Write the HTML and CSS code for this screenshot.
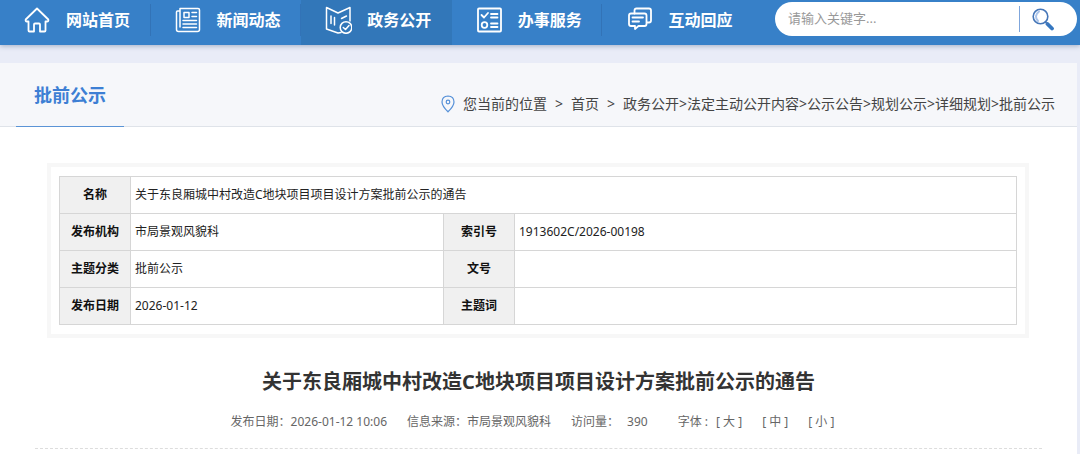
FILE: index.html
```
<!DOCTYPE html>
<html lang="zh-CN">

<head>
    <meta charset="UTF-8">
    <meta name="viewport" content="width=device-width, initial-scale=1.0">
    <title>批前公示</title>
    <link rel="stylesheet" href="styles.css">
</head>

<body>
    <header class="header">
        <nav class="nav">
            <a href="#" class="nav-item">
                <svg class="nav-icon" viewBox="0 0 28 28">
                    <path d="M14 2.500 L2.700 13.500 Q2.200 15.500 4 15.500 H5.500 V24.500 Q5.500 25.500 6.500 25.500 H11 V18.500 Q11 17.500 12 17.500 H16 Q17 17.500 17 18.500 V25.500 H21.500 Q22.500 25.500 22.500 24.500 V15.500 H24 Q25.800 15.500 25.300 13.500 Z" />
                </svg>
                <span>网站首页</span>
            </a>
            <a href="#" class="nav-item">
                <svg class="nav-icon thin" viewBox="0 0 28 28">
                    <path d="M6 2.500 H24 Q25.500 2.500 25.500 4 V23.500 Q25.500 25.500 23.500 25.500 H4.500 Q2.500 25.500 2.500 23.500 V6 Q2.500 5 3.500 5 H6 V2.500 M6 5 V21" />
                    <path d="M10 6.500 H15 V11.500 H10 Z M18 6.500 H22.500 M18 10.500 H22.500 M9 14.500 H22.500 M9 18 H22.500 M9 21.500 H22.500" />
                </svg>
                <span>新闻动态</span>
            </a>
            <a href="#" class="nav-item active">
                <svg class="nav-icon thin" viewBox="0 0 28 28">
                    <path d="M14 7 L2.500 1.500 V23 L14 27 L17 26.500 M14 7 L26 1.500 V15" />
                    <path d="M7 10 V17.500 M10.500 11.500 V19 M17.500 12.500 L22.500 10" />
                    <circle cx="22" cy="21.500" r="5.800" />
                    <path d="M19.300 21.500 L21.500 23.500 L25 19.500" />
                </svg>
                <span>政务公开</span>
            </a>
            <a href="#" class="nav-item">
                <svg class="nav-icon" viewBox="0 0 28 28">
                    <rect x="3" y="2.500" width="23" height="23" rx="1" />
                    <path d="M6.500 9 L9 11.500 L13 7 M16 8 H22.500 M16 11.500 H22.500 M16 17.500 H22.500 M16 21 H22.500" />
                    <circle cx="9.500" cy="19" r="2.800" />
                </svg>
                <span>办事服务</span>
            </a>
            <a href="#" class="nav-item">
                <svg class="nav-icon" viewBox="0 0 28 28">
                    <path d="M9.500 7.500 V4.500 Q9.500 2.500 11.500 2.500 H24 Q26 2.500 26 4.500 V14.500 Q26 16.500 24 16.500 H22" />
                    <path d="M6 7.500 H19.500 Q21.500 7.500 21.500 9.500 V18 Q21.500 20 19.500 20 H13.500 L10 23 V20 H6 Q4 20 4 18 V9.500 Q4 7.500 6 7.500 Z M7.500 11.500 H18 M7.500 15.500 H14" />
                </svg>
                <span>互动回应</span>
            </a>
        </nav>
        <form class="search">
            <input type="text" class="search-input" aria-label="搜索" placeholder="请输入关键字...">
            <button type="button" class="search-button" aria-label="搜索">
                <svg viewBox="0 0 24 24">
                    <path class="handle" d="M16.500 17 L21 21.500" />
                    <circle cx="9.500" cy="9.500" r="7.300" />
                    <path class="shine" d="M8 4.500 Q2.500 9 7 14" />
                    <path class="neck" d="M14.500 15 L17 17.500" />
                </svg>
            </button>
        </form>
    </header>

    <main class="page">
        <div class="page-head">
            <h2 class="page-title">批前公示</h2>
            <div class="breadcrumb">
                <svg class="pin" viewBox="0 0 14 18">
                    <path d="M7 1 Q13 1.300 13 7 Q13 11 7 16.800 Q1 11 1 7 Q1 1.300 7 1 Z" />
                    <circle cx="7" cy="7" r="1.800" />
                </svg>
                <span>您当前的位置</span>
                <span>&gt;</span>
                <a href="#">首页</a>
                <span>&gt;</span>
                <span><a href="#">政务公开</a>&gt;<a href="#">法定主动公开内容</a>&gt;<a href="#">公示公告</a>&gt;<a href="#">规划公示</a>&gt;<a href="#">详细规划</a>&gt;<a href="#">批前公示</a></span>
            </div>
        </div>

        <div class="info">
            <table class="info-table">
                <colgroup>
                    <col class="col-label">
                    <col class="col-value">
                    <col class="col-label">
                    <col>
                </colgroup>
                <tr>
                    <th scope="row">名称</th>
                    <td colspan="3">关于东良厢城中村改造C地块项目项目设计方案批前公示的通告</td>
                </tr>
                <tr>
                    <th scope="row">发布机构</th>
                    <td>市局景观风貌科</td>
                    <th scope="row">索引号</th>
                    <td>1913602C/2026-00198</td>
                </tr>
                <tr>
                    <th scope="row">主题分类</th>
                    <td>批前公示</td>
                    <th scope="row">文号</th>
                    <td></td>
                </tr>
                <tr>
                    <th scope="row">发布日期</th>
                    <td>2026-01-12</td>
                    <th scope="row">主题词</th>
                    <td></td>
                </tr>
            </table>
        </div>

        <article class="article">
            <h1>关于东良厢城中村改造C地块项目项目设计方案批前公示的通告</h1>
            <div class="meta">
                <span>发布日期：2026-01-12 10:06</span>
                <span>信息来源：市局景观风貌科</span>
                <span class="visits">访问量：<span>390</span></span>
                <div class="font-size">
                    <span>字体 :</span>
                    <div class="sizes">
                        <button type="button">[ 大 ]</button>
                        <button type="button">[ 中 ]</button>
                        <button type="button">[ 小 ]</button>
                    </div>
                </div>
            </div>
        </article>
    </main>
</body>

</html>
```
FILE: styles.css
```
* {
    box-sizing: border-box;
}

body {
    margin: 0;
    min-height: 100vh;
    display: flex;
    flex-direction: column;
    font-family: "Noto Sans", "Noto Sans CJK SC", sans-serif;
    font-size: 12px;
    color: #222;
    background-color: #e9ecf7;
}

a {
    color: inherit;
    text-decoration: none;
}

/* top bar */
.header {
    display: flex;
    align-items: flex-start;
    height: 45px;
    padding-right: 3px;
    background-color: #3780c8;
    box-shadow: 0 1px 5px rgba(60, 80, 120, 0.4);
}

.nav {
    flex: 1;
    display: flex;
    height: 100%;
}

.nav-item {
    flex: 1;
    display: flex;
    align-items: center;
    gap: 15px;
    padding: 0 0 5px 23px;
    color: #fff;
    font-size: 16px;
    font-weight: bold;
    line-height: 24px;
    white-space: nowrap;
    background: linear-gradient(#3273b7, #3273b7) right 4px / 1px 32px no-repeat;
}

.nav-item:last-child {
    background: none;
}

.nav-item.active {
    background: #3277b9;
}

.nav-icon {
    flex: none;
    width: 28px;
    height: 28px;
    fill: none;
    stroke: #fff;
    stroke-width: 1.8;
    stroke-linecap: round;
    stroke-linejoin: round;
}

.nav-icon.thin {
    stroke-width: 1.5;
}

.search {
    display: flex;
    align-items: center;
    width: 302px;
    height: 34px;
    margin: 2px 0 0 22px;
    border-radius: 17px;
    background-color: #fff;
}

.search-input {
    flex: 1;
    min-width: 0;
    height: 26px;
    padding: 0 0 2px 13px;
    border: none;
    border-right: 1px solid #7fa6dc;
    outline: none;
    background: none;
    font-family: inherit;
    font-size: 13px;
}

.search-input::placeholder {
    color: #999;
}

.search-button {
    display: flex;
    padding: 0 22px 0 11px;
    border: none;
    background: none;
    cursor: pointer;
}

.search-button svg {
    width: 24px;
    height: 24px;
    fill: none;
    stroke: #4576b8;
    stroke-width: 1.6;
    stroke-linecap: round;
}

.search-button .handle {
    stroke: #3577c0;
    stroke-width: 3.8;
}

.search-button .shine {
    stroke: #a9c3ea;
    stroke-width: 2;
}

/* content */
.page {
    flex: 1;
    margin: 18px 3px 0 0;
    background-color: #fff;
}

.page-head {
    display: flex;
    justify-content: space-between;
    height: 64px;
    padding: 0 22px 0 16px;
    border-bottom: 1px solid #dfe3e9;
    background-color: #f6f7fa;
}

.page-title {
    height: 64px;
    margin: 0;
    padding: 0 18px;
    border-bottom: 1px solid #5b94d6;
    color: #3d7fd4;
    font-size: 18px;
    line-height: 64px;
}

.breadcrumb {
    display: flex;
    align-items: center;
    gap: 8px;
    padding-top: 18px;
    color: #444;
    font-size: 14px;
    line-height: 20px;
    white-space: nowrap;
}

.pin {
    width: 14px;
    height: 18px;
    fill: none;
    stroke: #5590d8;
    stroke-width: 1.2;
}

.info {
    margin: 36px 48px 0 47px;
    padding: 9px 8px;
    border: 4px solid #f7f7f7;
}

.info-table {
    width: 100%;
    border-collapse: collapse;
    table-layout: fixed;
}

.col-label {
    width: 71px;
}

.col-value {
    width: 313px;
}

.info-table th,
.info-table td {
    height: 37px;
    padding: 0 4px;
    border: 1px solid #d6d6d6;
    line-height: 20px;
}

.info-table th {
    background-color: #f0f0f0;
    color: #111;
}

.article {
    margin: 0 35px;
    padding-bottom: 16px;
    border-bottom: 1px dashed #ddd;
    text-align: center;
}

.article h1 {
    margin: 28px 0 0;
    color: #333;
    font-size: 20px;
    line-height: 32px;
}

.meta {
    display: flex;
    justify-content: center;
    gap: 20px;
    margin-top: 14px;
    padding-right: 12px;
    color: #666;
    line-height: 20px;
}

.visits span {
    margin-left: 8px;
}

.font-size {
    display: flex;
    gap: 8px;
    margin-left: 10px;
}

.sizes {
    display: flex;
    gap: 20px;
}

.sizes button {
    padding: 0;
    border: none;
    background: none;
    color: inherit;
    font: inherit;
    cursor: pointer;
}
```
